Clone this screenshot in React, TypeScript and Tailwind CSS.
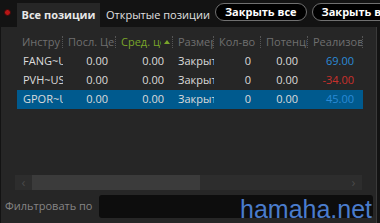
import React from "react";

const COLS = [
  { label: "Инстру", w: "w-[46px]" },
  { label: "Посл. Цена", w: "w-[53px]" },
  { label: "Сред. цена", w: "w-[57px]", active: true },
  { label: "Размер", w: "w-[41px]" },
  { label: "Кол-во", w: "w-[47px]" },
  { label: "Потенциал", w: "w-[47px]" },
  { label: "Реализовано", w: "w-[55px]" },
];

const ROWS = [
  { sym: "FANG~US", last: "0.00", avg: "0.00", size: "Закрыта", qty: "0", pot: "0.00", real: "69.00", neg: false },
  { sym: "PVH~US", last: "0.00", avg: "0.00", size: "Закрыта", qty: "0", pot: "0.00", real: "-34.00", neg: true },
  { sym: "GPOR~US", last: "0.00", avg: "0.00", size: "Закрыта", qty: "0", pot: "0.00", real: "45.00", neg: false, selected: true },
];

export default function App() {
  return (
    <div
      className="relative w-[380px] h-[223px] overflow-hidden bg-[#131313] flex flex-col text-[11px]"
      style={{ fontFamily: '"Open Sans", "Noto Sans", sans-serif' }}
    >
      {/* вкладки */}
      <div className="h-[27px] flex items-end shrink-0 whitespace-nowrap">
        <div className="w-[17px] shrink-0 h-full flex items-center justify-center">
          <span className="w-[7px] h-[7px] rounded-full bg-[#b81616] border border-[#3a0a0a] ml-[-2px] mt-[-3px]" />
        </div>
        <div className="w-[83px] shrink-0 h-[24px] bg-[#262626] flex items-center justify-center text-[#e8e8e8] font-bold">
          Все позиции
        </div>
        <div className="shrink-0 h-[24px] pl-[6px] pr-[5px] flex items-center text-[#e0e0e0]">Открытые позиции</div>
        <div className="shrink-0 self-start mt-[3px] h-[18px] px-[9px] rounded-full border border-[#707070] bg-black text-white font-bold flex items-center">
          Закрыть все
        </div>
        <div className="shrink-0 self-start mt-[3px] ml-[5px] h-[18px] px-[9px] rounded-full border border-[#707070] bg-black text-white font-bold flex items-center">
          Закрыть выбранные
        </div>
      </div>

      {/* таблица */}
      <div className="flex-1 ml-px mr-[3px] bg-[#262626] border-r border-[#3a3a3a] flex flex-col">
        <div className="pt-[5px] pl-[16px] w-[362px]">
          <div className="h-[20px] flex items-center">
            {COLS.map((c) => (
              <div key={c.label} className={`${c.w} shrink-0 h-full flex items-center overflow-hidden whitespace-nowrap`}>
                <span className={`flex-1 overflow-hidden pl-[5px] ${c.active ? "text-[#7aa52a]" : "text-[#6f6f6f]"}`}>
                  {c.active ? (
                    <span className="flex items-center">
                      <span className="overflow-hidden w-[40px]">{c.label}</span>
                      <span className="ml-[3px] w-0 h-0 border-l-[3px] border-r-[3px] border-b-[4px] border-l-transparent border-r-transparent border-b-[#7aa52a]" />
                    </span>
                  ) : (
                    c.label
                  )}
                </span>
                <span className="h-[12px] border-l border-dotted border-[#555]" />
              </div>
            ))}
          </div>
          {ROWS.map((r) => (
            <div
              key={r.sym}
              className={`h-[19px] flex items-center whitespace-nowrap text-[#dcdcdc] ${r.selected ? "bg-[#005a8e]" : ""}`}
            >
              <div className="w-[46px] shrink-0 pl-[6px] overflow-hidden">{r.sym}</div>
              <div className="w-[53px] shrink-0 pr-[8px] text-right">{r.last}</div>
              <div className="w-[57px] shrink-0 pr-[9px] text-right">{r.avg}</div>
              <div className="w-[41px] shrink-0 pl-[5px] overflow-hidden">{r.size}</div>
              <div className="w-[47px] shrink-0 pr-[10px] text-right">{r.qty}</div>
              <div className="w-[47px] shrink-0 pr-[10px] text-right">{r.pot}</div>
              <div className={`w-[55px] shrink-0 pr-[9px] text-right ${r.neg ? "text-[#c9302c]" : "text-[#2b8ad6]"}`}>{r.real}</div>
            </div>
          ))}
        </div>

        <div className="flex-1" />

        {/* скролл */}
        <div className="ml-[14px] mr-[14px] h-[15px] bg-[#2d2d2d] flex items-center">
          <span className="w-[17px] text-center text-[#4a4a4a] text-[13px] leading-none">‹</span>
          <span className="w-[168px] h-full bg-[#3b3b3b]" />
          <span className="flex-1" />
          <span className="w-[17px] text-center text-[#4a4a4a] text-[13px] leading-none">›</span>
        </div>

        {/* фильтр */}
        <div className="h-[33px] flex items-center">
          <span className="pl-[4px] w-[98px] shrink-0 text-[#858585]">Фильтровать по</span>
          <div className="flex-1 h-[23px] mr-[3px] rounded-[3px] bg-[#0d0d0d]" />
        </div>
      </div>

      <span
        className="absolute left-[240px] top-[197px] text-[25px] leading-none text-[#4a7ccc]"
        style={{ fontFamily: '"Liberation Sans", Arial, sans-serif' }}
      >
        hamaha.net
      </span>
    </div>
  );
}
